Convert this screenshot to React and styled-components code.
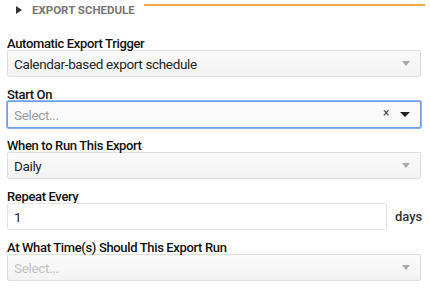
import React from "react";
import styled, { createGlobalStyle } from "styled-components";

const Global = createGlobalStyle`
  html, body { margin: 0; padding: 0; background: #fff; }
  body { font-family: Roboto, "Liberation Sans", sans-serif; color: #222; }
`;

const Page = styled.div`
  width: 430px;
  height: 290px;
  box-sizing: border-box;
  padding: 0 9px 0 7px;
  overflow: hidden;
`;

const Header = styled.div`
  display: flex;
  align-items: center;
  height: 20px;
  margin-bottom: 17px;
  padding-left: 9px;
`;

const Caret = styled.span`
  width: 0;
  height: 0;
  border-top: 4px solid transparent;
  border-bottom: 4px solid transparent;
  border-left: 6px solid #333;
  margin-right: 10px;
`;

const HeaderTitle = styled.span`
  font-family: Roboto, "Liberation Sans", sans-serif;
  font-size: 11.5px;
  font-weight: 700;
  color: #777;
  letter-spacing: 0px;
`;

const Rule = styled.span`
  flex: 1;
  align-self: flex-start;
  margin-top: 4px;
  margin-left: 9px;
  margin-right: -4px;
  height: 2px;
  background: #f3a640;
`;

const Group = styled.div`
  margin-bottom: 11px;
`;

const Label = styled.div`
  font-size: 13px;
  font-weight: 500;
  line-height: 13px;
  height: 13px;
  letter-spacing: -0.35px;
  color: #111;
`;

const Box = styled.div`
  box-sizing: border-box;
  height: 27px;
  display: flex;
  align-items: center;
  padding: 0 10px 0 6px;
  border: 1px solid ${(p) => (p.$focus ? "#6f9df0" : "#dedede")};
  border-radius: 2px;
  background: ${(p) => (p.$focus ? "#fafafa" : "linear-gradient(#fafafa, #f3f3f3)")};
  box-shadow: ${(p) => (p.$focus ? "0 0 0 1px #8fb3f3" : "none")};
  font-size: 13.5px;
  letter-spacing: -0.35px;
  color: ${(p) => (p.$muted ? "#9a9a9a" : p.$disabled ? "#c2c2c2" : "#262626")};
`;

const BoxText = styled.span`
  flex: 1;
`;

const Clear = styled.span`
  font-size: 12px;
  color: #444;
  margin-right: 11px;
  margin-top: -4px;
`;

const Arrow = styled.span`
  width: 0;
  height: 0;
  border-left: 4px solid transparent;
  border-right: 4px solid transparent;
  border-top: 5px solid ${(p) => (p.$dark ? "#222" : "#aaa")};
  ${(p) => (p.$dark ? "border-left-width: 5px; border-right-width: 5px;" : "")}
`;

const Row = styled.div`
  display: flex;
  align-items: center;
`;

const Input = styled.div`
  box-sizing: border-box;
  flex: 0 0 380px;
  height: 27px;
  display: flex;
  align-items: center;
  padding-left: 6px;
  border: 1px solid #e3e3e3;
  border-radius: 2px;
  background: #fff;
  font-size: 13.5px;
  color: #222;
`;

const Unit = styled.span`
  margin-left: 8px;
  font-size: 13px;
  font-weight: 500;
  color: #333;
`;

const Select = ({ value, focus, muted, disabled, clear }) => (
  <Box $focus={focus} $muted={muted} $disabled={disabled}>
    <BoxText>{value}</BoxText>
    {clear && <Clear>×</Clear>}
    <Arrow $dark={focus} />
  </Box>
);

export default function App() {
  return (
    <>
      <Global />
      <Page>
        <Header>
          <Caret />
          <HeaderTitle>EXPORT SCHEDULE</HeaderTitle>
          <Rule />
        </Header>
        <Group>
          <Label>Automatic Export Trigger</Label>
          <Select value="Calendar-based export schedule" />
        </Group>
        <Group>
          <Label>Start On</Label>
          <Select value="Select..." focus muted clear />
        </Group>
        <Group>
          <Label>When to Run This Export</Label>
          <Select value="Daily" />
        </Group>
        <Group>
          <Label>Repeat Every</Label>
          <Row>
            <Input>1</Input>
            <Unit>days</Unit>
          </Row>
        </Group>
        <Group>
          <Label>At What Time(s) Should This Export Run</Label>
          <Select value="Select..." disabled />
        </Group>
      </Page>
    </>
  );
}
